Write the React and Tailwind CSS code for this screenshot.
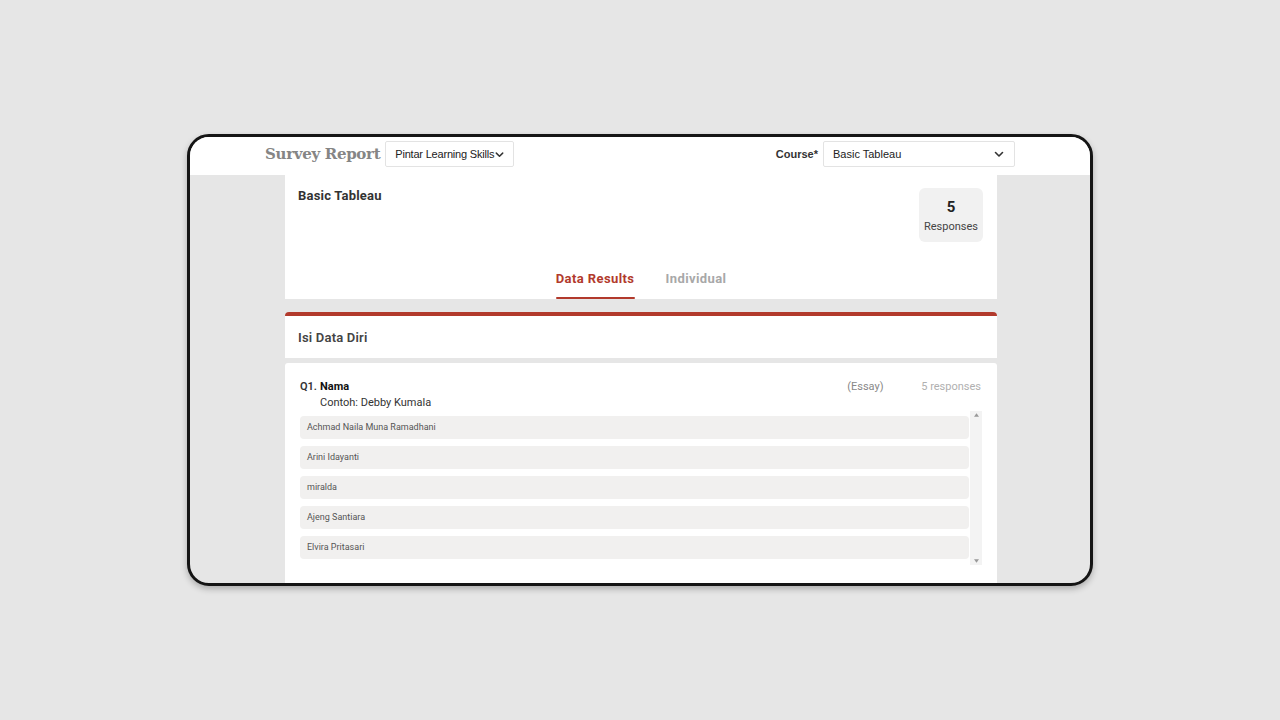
import React from "react";

const names = [
  "Achmad Naila Muna Ramadhani",
  "Arini Idayanti",
  "miralda",
  "Ajeng Santiara",
  "Elvira Pritasari",
];

function Chevron({ className }) {
  return (
    <svg viewBox="0 0 12 12" className={className} fill="none" stroke="currentColor" strokeWidth="1.6" strokeLinecap="round" strokeLinejoin="round">
      <path d="M2.5 4.5 L6 8 L9.5 4.5" />
    </svg>
  );
}

export default function App() {
  return (
    <div className="w-full h-[720px] bg-[#e6e6e6] flex items-center justify-center" style={{ fontFamily: "Roboto, 'Noto Sans', sans-serif" }}>
      <div className="w-[906px] h-[452px] border-[3px] border-[#151515] rounded-[22px] overflow-hidden bg-[#e6e6e6] shadow-[0_3px_6px_rgba(0,0,0,0.25)] flex flex-col">
        {/* header */}
        <div className="h-[38px] shrink-0 bg-white flex items-start justify-between px-[75px] pt-[4px]">
          <div className="flex items-center gap-[5px]">
            <span className="text-[15px] font-bold text-[#858585] tracking-[-0.3px] whitespace-nowrap" style={{ fontFamily: "'DejaVu Serif', serif" }}>Survey Report</span>
            <div className="h-[26px] w-[129px] shrink-0 border border-[#e3e3e3] rounded-[2px] flex items-center pl-[9px] text-[11px] text-[#222] whitespace-nowrap" style={{ fontFamily: "'Liberation Sans', Arial, sans-serif" }}>
              <span className="tracking-[-0.2px]">Pintar Learning Skills</span>
              <Chevron className="w-[11px] h-[11px] text-[#333] shrink-0" />
            </div>
          </div>
          <div className="flex items-center gap-[5px]" style={{ fontFamily: "'Liberation Sans', Arial, sans-serif" }}>
            <span className="text-[11px] font-bold text-[#333]">Course*</span>
            <div className="h-[26px] w-[192px] border border-[#e3e3e3] rounded-[2px] flex items-center justify-between pl-[9px] pr-[9px] text-[11px] text-[#222]">
              <span>Basic Tableau</span>
              <Chevron className="w-[12px] h-[12px] text-[#333]" />
            </div>
          </div>
        </div>

        {/* body */}
        <div className="flex-1 overflow-hidden pl-[95px] pr-[93px]">
          <div className="w-[712px] flex flex-col">
            {/* card 1 */}
            <div className="bg-white h-[124px] flex flex-col px-[13px] pt-[13px]">
              <div className="flex justify-between">
                <span className="text-[13px] font-bold text-[#333] tracking-[0.2px] mt-[-2px]">Basic Tableau</span>
                <div className="w-[64px] h-[54px] bg-[#f1f1f1] rounded-[6px] flex flex-col items-center pt-[10px] mr-[1px]">
                  <span className="text-[15px] font-bold text-[#222] leading-[18px]">5</span>
                  <span className="text-[11px] text-[#444] leading-[16px] mt-[3px]">Responses</span>
                </div>
              </div>
              <div className="flex-1 flex items-end justify-center gap-[31px]">
                <div className="flex flex-col items-center">
                  <span className="text-[13px] font-bold text-[#b23a2c] leading-[16px] pb-[10px] tracking-[0.4px]">Data Results</span>
                  <div className="h-[2px] w-[79px] bg-[#b23a2c] rounded-full" />
                </div>
                <div className="flex flex-col items-center">
                  <span className="text-[13px] font-bold text-[#a8a8a8] leading-[16px] pb-[10px] tracking-[0.4px]">Individual</span>
                  <div className="h-[2px] w-[60px] bg-transparent" />
                </div>
              </div>
            </div>

            {/* card 2 */}
            <div className="mt-[13px] bg-white h-[46px] rounded-t-[4px] border-t-[4px] border-[#b23a2c] flex items-center px-[13px]">
              <span className="text-[13px] font-semibold text-[#444] tracking-[0.2px] mt-[1px]">Isi Data Diri</span>
            </div>

            {/* card 3 */}
            <div className="mt-[5px] bg-white h-[240px] px-[15px] pt-[17px] rounded-t-[3px]">
              <div className="flex items-start">
                <span className="text-[11px] font-semibold text-[#333] w-[20px] leading-[14px]">Q1.</span>
                <div className="flex-1 flex flex-col">
                  <span className="text-[11px] font-bold text-[#111] leading-[14px]">Nama</span>
                  <span className="text-[11px] text-[#333] leading-[14px] mt-[2px]">Contoh: Debby Kumala</span>
                </div>
                <span className="text-[11px] text-[#888] leading-[14px] w-[74px]">(Essay)</span>
                <span className="text-[11px] text-[#b0b0b0] leading-[14px] mr-[1px]">5 responses</span>
              </div>
              <div className="mt-[1px] flex">
                <div className="flex-1 flex flex-col gap-[7px] pt-[5px]">
                  {names.map((n) => (
                    <div key={n} className="h-[23px] bg-[#f1f0ef] rounded-[4px] flex items-center px-[7px] text-[9px] text-[#555]">
                      {n}
                    </div>
                  ))}
                </div>
                <div className="w-[12px] h-[154px] ml-[1px] bg-[#f3f3f3] flex flex-col items-center justify-between py-[2px]">
                  <svg viewBox="0 0 6 4" className="w-[5px] h-[4px] text-[#999]" fill="currentColor"><path d="M3 0 L6 4 L0 4 Z" /></svg>
                  <svg viewBox="0 0 6 4" className="w-[5px] h-[4px] text-[#999]" fill="currentColor"><path d="M0 0 L6 0 L3 4 Z" /></svg>
                </div>
              </div>
            </div>
          </div>
        </div>
      </div>
    </div>
  );
}
